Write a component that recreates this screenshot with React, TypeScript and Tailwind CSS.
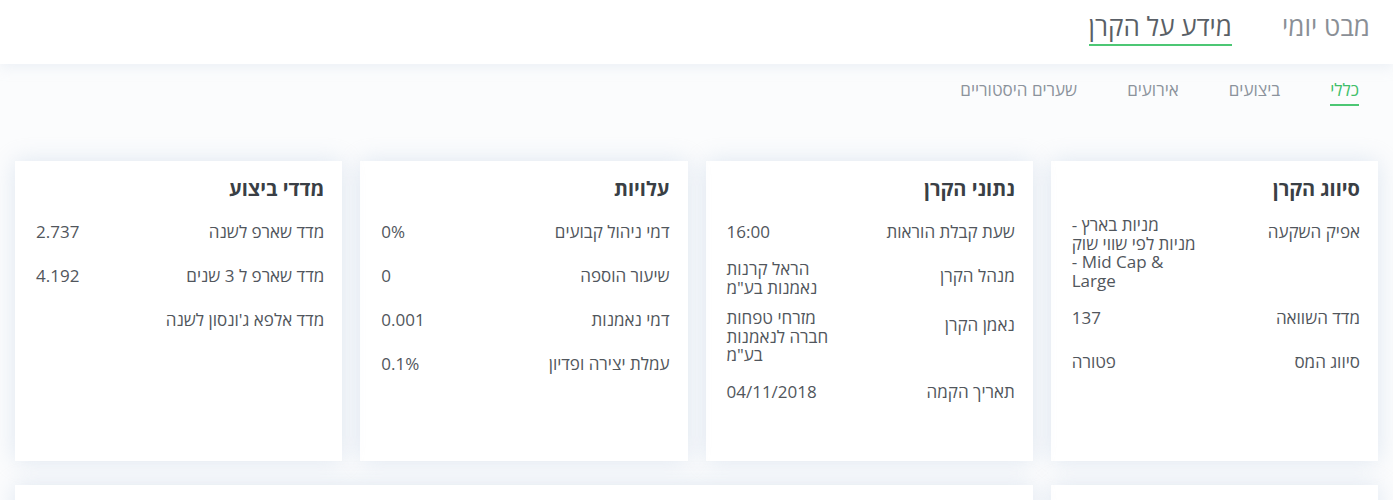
type Row = { label: string; value?: string };

const cards: { title: string; rows: Row[] }[] = [
  {
    title: "סיווג הקרן",
    rows: [
      { label: "אפיק השקעה", value: "מניות בארץ - מניות לפי שווי שוק - Mid Cap & Large" },
      { label: "מדד השוואה", value: "137" },
      { label: "סיווג המס", value: "פטורה" },
    ],
  },
  {
    title: "נתוני הקרן",
    rows: [
      { label: "שעת קבלת הוראות", value: "16:00" },
      { label: "מנהל הקרן", value: 'הראל קרנות נאמנות בע"מ' },
      { label: "נאמן הקרן", value: 'מזרחי טפחות חברה לנאמנות בע"מ' },
      { label: "תאריך הקמה", value: "04/11/2018" },
    ],
  },
  {
    title: "עלויות",
    rows: [
      { label: "דמי ניהול קבועים", value: "0%" },
      { label: "שיעור הוספה", value: "0" },
      { label: "דמי נאמנות", value: "0.001" },
      { label: "עמלת יצירה ופדיון", value: "0.1%" },
    ],
  },
  {
    title: "מדדי ביצוע",
    rows: [
      { label: "מדד שארפ לשנה", value: "2.737" },
      { label: "מדד שארפ ל 3 שנים", value: "4.192" },
      { label: "מדד אלפא ג'ונסון לשנה" },
    ],
  },
];

const subTabs = ["כללי", "ביצועים", "אירועים", "שערים היסטוריים"];

function InfoCard({ title, rows }: { title: string; rows: Row[] }) {
  return (
    <div className="h-[300px] bg-white pt-[14px] pr-[18px] pl-[21px] shadow-[0_0_22px_rgba(190,206,226,0.45)]">
      <h3 className="mb-[13px] text-[20px] font-bold leading-7 text-[#3a3f45]">{title}</h3>
      <div className="flex flex-col gap-3">
        {rows.map((r) => (
          <div key={r.label} className="flex items-start justify-between">
            <div className="flex min-h-[32px] items-center leading-[18.5px]">{r.label}</div>
            {/* values are laid out ltr, like the original table cells */}
            <div
              dir="ltr"
              className="flex min-h-[32px] w-[125px] flex-col justify-center text-left leading-[18.5px]"
            >
              {r.value}
            </div>
          </div>
        ))}
      </div>
    </div>
  );
}

export default function App() {
  return (
    <div
      dir="rtl"
      className="min-h-[500px] overflow-hidden bg-[#fbfcfd] text-[17px] text-[#51565c]"
      style={{ fontFamily: '"Open Sans", "Liberation Sans", sans-serif' }}
    >
      {/* top tabs */}
      <header className="relative z-10 flex h-16 items-start gap-[50px] bg-white pt-[10px] pr-[23px] shadow-[0_4px_12px_rgba(200,212,228,0.25)]">
        <span className="text-[26px] leading-[33px] text-[#8a8f96]">מבט יומי</span>
        <span className="border-b-2 border-[#4cc774] pb-[1px] text-[26px] leading-[33px] text-[#5a5f66]">
          מידע על הקרן
        </span>
      </header>

      {/* sub tabs */}
      <nav className="flex gap-[50px] pt-[14px] pr-[34px]">
        {subTabs.map((t, i) => (
          <span
            key={t}
            className={
              i === 0
                ? "border-b-2 border-[#4cc774] pb-[2px] text-[17px] leading-[24px] text-[#3fbf6a]"
                : "pb-[4px] text-[17px] leading-[24px] text-[#8c939c]"
            }
          >
            {t}
          </span>
        ))}
      </nav>

      <main className="grid grid-cols-4 gap-x-[18px] gap-y-6 px-[15px] pt-[55px]">
        {cards.map((c) => (
          <InfoCard key={c.title} title={c.title} rows={c.rows} />
        ))}
        <div className="h-[300px] bg-white shadow-[0_0_22px_rgba(190,206,226,0.45)]" />
        <div className="col-span-3 h-[300px] bg-white shadow-[0_0_22px_rgba(190,206,226,0.45)]" />
      </main>
    </div>
  );
}
